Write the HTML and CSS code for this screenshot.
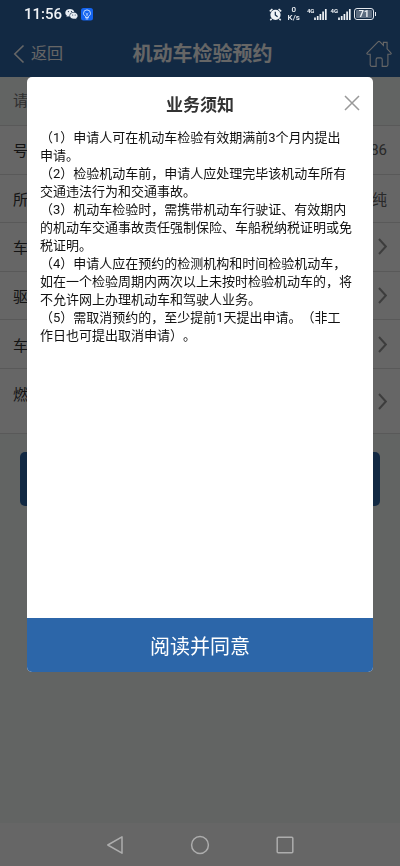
FILE: index.html
```html
<!DOCTYPE html>
<html lang="zh-CN">
<head>
<meta charset="utf-8">
<meta name="viewport" content="width=device-width, initial-scale=1">
<title>机动车检验预约</title>
<link rel="stylesheet" href="styles.css">
</head>
<body>
<div class="status">
  <span class="clock">11:56</span>
  <svg class="wechat" width="13" height="12" viewBox="0 0 13 12" aria-hidden="true">
    <path fill="#e8edf3" d="M5 1C2.300 1 .3 2.700 .3 4.800c0 1.200.6 2.200 1.600 2.900L1.500 9l1.600-.8c.5.2 1 .2 1.500.2C4.200 5.800 6.200 4 9.300 4 8.900 2.300 7.200 1 5 1z"/>
    <path fill="#e8edf3" d="M8.900 4.600c-2.200 0-3.900 1.400-3.900 3.100s1.700 3.100 3.900 3.100c.4 0 .8 0 1.200-.2l1.300.7-.3-1.100c.9-.6 1.500-1.500 1.500-2.500 0-1.700-1.600-3.100-3.700-3.100z"/>
    <g fill="#132a46"><circle cx="3.400" cy="3.600" r=".6"/><circle cx="6.500" cy="3.600" r=".6"/><circle cx="7.700" cy="6.900" r=".5"/><circle cx="10.200" cy="6.900" r=".5"/></g>
  </svg>
  <svg class="lamp" width="12" height="13" viewBox="0 0 12 13" aria-hidden="true">
    <rect width="12" height="12.500" rx="2.500" fill="#1464f0"/>
    <g fill="none" stroke="#d8e8ff" stroke-width=".9"><path d="M4.500 8.300C3.300 7.600 2.500 6.700 2.500 5.400a3.500 3.500 0 0 1 7 0c0 1.300-.8 2.200-2 2.900v1.200h-3zM4.700 10.900h2.600"/><path d="M4.700 5.200L6 6.400l1.300-1.200M6 6.400v2"/></g>
  </svg>
  <span class="spacer"></span>
  <svg class="alarm" width="13" height="13" viewBox="0 0 13 13" aria-hidden="true">
    <path d="M.8 3.400L3.400 1M12.200 3.400L9.600 1M2.600 10.800l-1.300 1.400M10.400 10.800l1.300 1.400" stroke="#f0f3f6" stroke-width="1.500"/>
    <circle cx="6.500" cy="6.800" r="5.100" fill="#f0f3f6"/>
    <path d="M6.300 3.700V7l2.300 1.800" fill="none" stroke="#132a46" stroke-width="1.200"/>
  </svg>
  <span class="speed"><span>0</span><span>K/s</span></span>
  <span class="signal"><span class="gen">4G</span>
    <svg width="13" height="12" viewBox="0 0 13 12" aria-hidden="true"><path d="M1 9.500V12M3.700 8v4M6.400 6v6M9.100 3.500V12M11.800 1v11" stroke="#f0f3f6" stroke-width="1.700"/></svg>
  </span>
  <span class="signal"><span class="gen">4G</span>
    <svg width="13" height="12" viewBox="0 0 13 12" aria-hidden="true"><path d="M1 9.500V12M3.700 8v4M6.400 6v6M9.100 3.500V12M11.800 1v11" stroke="#f0f3f6" stroke-width="1.700"/></svg>
  </span>
  <span class="battery"><span class="level">71</span></span>
</div>

<div class="app">
  <header class="bar">
    <a class="back" href="#back"><svg width="12" height="20" viewBox="0 0 12 20" aria-hidden="true"><path d="M10.500 1.500L1.800 10l8.700 8.500" fill="none" stroke="currentColor" stroke-width="1.600"/></svg><span>返回</span></a>
    <h1 class="title">机动车检验预约</h1>
    <a class="home" href="#home" aria-label="首页"><svg width="26" height="28" viewBox="0 0 26 28" aria-hidden="true"><path d="M4.200 14.200H1.800c-.9 0-1.200-.8-.6-1.400L12 1.900c.7-.7 1.300-.7 2 0l3.400 3.400V2.400h3.700v6.400l3.800 4c.6.6.3 1.400-.6 1.400h-2.400v10.600c0 1-.6 1.600-1.600 1.600h-4.100v-6.800c0-1-.7-1.700-1.600-1.700h-2.900c-.9 0-1.600.7-1.600 1.700v6.800H5.800c-1 0-1.600-.6-1.600-1.600z" fill="none" stroke="currentColor" stroke-width="1.100"/></svg></a>
  </header>

  <main class="form">
    <p class="hint">请</p>
    <ul class="rows">
      <li class="row"><span>号</span><span class="value">86</span></li>
      <li class="row"><span>所</span><span class="value">纯</span></li>
      <li class="row"><span>车</span><svg class="chevron" width="9" height="17" viewBox="0 0 9 17" aria-hidden="true"><path d="M1 1l6.800 7.500L1 16"/></svg></li>
      <li class="row"><span>驱</span><svg class="chevron" width="9" height="17" viewBox="0 0 9 17" aria-hidden="true"><path d="M1 1l6.800 7.500L1 16"/></svg></li>
      <li class="row"><span>车</span><svg class="chevron" width="9" height="17" viewBox="0 0 9 17" aria-hidden="true"><path d="M1 1l6.800 7.500L1 16"/></svg></li>
    </ul>
    <div class="row tall"><span class="top">燃</span><svg class="chevron" width="9" height="17" viewBox="0 0 9 17" aria-hidden="true"><path d="M1 1l6.800 7.500L1 16"/></svg></div>
    <button class="submit" type="button" aria-label="提交"></button>
  </main>

  <nav class="keys">
    <button type="button" aria-label="后退"><svg width="18" height="20" viewBox="0 0 18 20"><path d="M16 1.800v16.400L1.800 10z"/></svg></button>
    <button type="button" aria-label="主屏幕"><svg width="20" height="20" viewBox="0 0 20 20"><circle cx="10" cy="10" r="8.400"/></svg></button>
    <button type="button" aria-label="最近任务"><svg width="18" height="20" viewBox="0 0 18 20"><rect x="1.200" y="2.200" width="15.600" height="15.600" rx="1"/></svg></button>
  </nav>
</div>

<div class="overlay">
  <section class="dialog" role="dialog" aria-modal="true" aria-labelledby="notice-title">
    <div class="dialog-head">
      <h2 id="notice-title">业务须知</h2>
      <button class="close" type="button" aria-label="关闭"><svg width="16" height="16" viewBox="0 0 16 16"><path d="M1 1l14 14M15 1L1 15"/></svg></button>
    </div>
    <div class="notice">
      <p>（1）申请人可在机动车检验有效期满前3个月内提出申请。</p>
      <p>（2）检验机动车前，申请人应处理完毕该机动车所有交通违法行为和交通事故。</p>
      <p>（3）机动车检验时，需携带机动车行驶证、有效期内的机动车交通事故责任强制保险、车船税纳税证明或免税证明。</p>
      <p>（4）申请人应在预约的检测机构和时间检验机动车，如在一个检验周期内两次以上未按时检验机动车的，将不允许网上办理机动车和驾驶人业务。</p>
      <p>（5）需取消预约的，至少提前1天提出申请。（非工作日也可提出取消申请）。</p>
    </div>
    <button class="agree" type="button">阅读并同意</button>
  </section>
</div>
</body>
</html>
```
FILE: styles.css
```css
* { box-sizing: border-box; }
html, body { height: 100%; }
body {
  margin: 0;
  font-family: Roboto, "Noto Sans CJK SC", sans-serif;
  font-size: 15px;
  color: #333;
  background: #f6f9f7;
}
h1, h2, p, ul { margin: 0; padding: 0; }
ul { list-style: none; }
button { border: 0; padding: 0; font: inherit; background: none; }
a { color: inherit; text-decoration: none; }
svg { display: block; flex: none; }

.app { min-height: 100%; display: flex; flex-direction: column; }

.status {
  position: fixed;
  z-index: 3;
  top: 0;
  left: 0;
  right: 0;
  height: 28px;
  padding: 0 26px 0 24px;
  display: flex;
  align-items: center;
  color: #f0f3f6;
}
.clock { font: 500 15px/28px Roboto, sans-serif; margin-right: 3px; }
.wechat { margin-right: 3px; }
.spacer { flex: 1; }
.speed {
  display: flex;
  flex-direction: column;
  align-items: center;
  margin: 0 7px 0 6px;
  font: 500 8px/8px Roboto, sans-serif;
}
.signal { display: flex; margin-right: 3px; }
.gen { font: 700 6px/6px Roboto, sans-serif; }
.battery {
  position: relative;
  width: 20px;
  height: 12px;
  padding: 1px;
  border: 1px solid #e4e8ee;
  border-radius: 3px;
}
.battery::after {
  content: "";
  position: absolute;
  right: -3px;
  top: 3px;
  width: 1px;
  height: 4px;
  background: #e4e8ee;
}
.level {
  display: block;
  border-radius: 1px;
  background: #5c6c80;
  font: 700 9px/8px Roboto, sans-serif;
  text-align: center;
}

.bar {
  height: 77px;
  padding: 30px 8px 0 13px;
  display: grid;
  grid-template-columns: 1fr auto 1fr;
  align-items: center;
  background: #2e67a9;
  color: #fff;
}
.back { display: flex; align-items: center; gap: 6px; font-size: 16px; line-height: 24px; }
.title { font-size: 20px; line-height: 28px; font-weight: 700; }
.home { justify-self: end; }

.form { flex: 1; }
.hint { height: 48px; padding: 0 13px; line-height: 48px; color: #777; }
.rows { height: 243px; display: grid; grid-auto-rows: 1fr; background: #fff; }
.row {
  padding: 0 13px;
  display: flex;
  align-items: center;
  justify-content: space-between;
  border-top: 1px solid #dedede;
}
.value { color: #666; }
.chevron { fill: none; stroke: #999; stroke-width: 2; }
.tall { height: 66px; background: #fff; border-bottom: 1px solid #dedede; }
.top { padding-bottom: 16px; }
.submit {
  display: block;
  width: calc(100% - 40px);
  height: 54px;
  margin: 18px 20px;
  border-radius: 5px;
  background: #2e67a9;
}

.keys {
  height: 43px;
  display: grid;
  grid-template-columns: repeat(3, 85px);
  justify-content: center;
  background: #fff;
}
.keys button { display: grid; place-items: center; }
.keys svg {
  position: relative;
  z-index: 2;
  fill: none;
  stroke: #adadad;
  stroke-width: 1.500;
  stroke-linejoin: round;
}

.overlay {
  position: fixed;
  z-index: 1;
  inset: 0;
  padding: 77px 27px 194px;
  display: flex;
  background: rgba(0, 0, 0, 0.6);
}
.dialog {
  flex: 1;
  display: flex;
  flex-direction: column;
  overflow: hidden;
  border-radius: 5px;
  background: #fff;
}
.dialog-head {
  display: grid;
  grid-template-columns: 1fr auto 1fr;
  align-items: center;
  height: 52px;
  padding: 0 13px;
}
.dialog-head h2 { grid-column: 2; font-size: 17px; line-height: 24px; padding-top: 4px; }
.close { justify-self: end; }
.close svg { stroke: #999; stroke-width: 1.500; fill: none; }
.notice {
  flex: 1;
  padding: 0 20px 0 13px;
  font-size: 13px;
  line-height: 18px;
  color: #111;
  text-spacing-trim: space-all;
}
.agree {
  height: 54px;
  background: #2c66a9;
  color: #fff;
  font-size: 20px;
}
```
